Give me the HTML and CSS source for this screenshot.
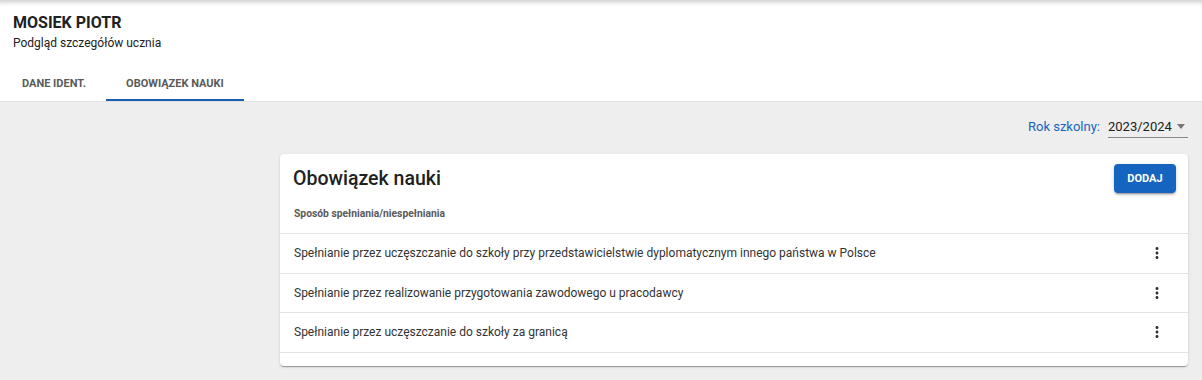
FILE: index.html
```html
<!DOCTYPE html>
<html lang="pl">
<head>
<meta charset="utf-8">
<link rel="stylesheet" href="styles.css">
</head>
<body>
<header class="header">
  <div class="titles">
    <h1 class="name">MOSIEK PIOTR</h1>
    <div class="subtitle">Podgląd szczegółów ucznia</div>
  </div>
  <nav class="tabs">
    <div class="tab">DANE IDENT.</div>
    <div class="tab active">OBOWIĄZEK NAUKI</div>
  </nav>
</header>
<main class="content">
  <div class="year-row">
    <span class="year-label">Rok szkolny:</span>
    <div class="select">
      <span class="select-value">2023/2024</span>
      <span class="select-arrow"></span>
    </div>
  </div>
  <section class="card">
    <div class="card-head">
      <h2 class="card-title">Obowiązek nauki</h2>
      <button class="btn">DODAJ</button>
    </div>
    <div class="col-head">Sposób spełniania/niespełniania</div>
    <div class="row">
      <span class="row-text">Spełnianie przez uczęszczanie do szkoły przy przedstawicielstwie dyplomatycznym innego państwa w Polsce</span>
      <svg class="kebab" viewBox="0 0 24 24" width="24" height="24"><path d="M12 8c1.1 0 2-.9 2-2s-.9-2-2-2-2 .9-2 2 .9 2 2 2zm0 2c-1.1 0-2 .9-2 2s.9 2 2 2 2-.9 2-2-.9-2-2-2zm0 6c-1.1 0-2 .9-2 2s.9 2 2 2 2-.9 2-2-.9-2-2-2z"/></svg>
    </div>
    <div class="row">
      <span class="row-text">Spełnianie przez realizowanie przygotowania zawodowego u pracodawcy</span>
      <svg class="kebab" viewBox="0 0 24 24" width="24" height="24"><path d="M12 8c1.1 0 2-.9 2-2s-.9-2-2-2-2 .9-2 2 .9 2 2 2zm0 2c-1.1 0-2 .9-2 2s.9 2 2 2 2-.9 2-2-.9-2-2-2zm0 6c-1.1 0-2 .9-2 2s.9 2 2 2 2-.9 2-2-.9-2-2-2z"/></svg>
    </div>
    <div class="row">
      <span class="row-text">Spełnianie przez uczęszczanie do szkoły za granicą</span>
      <svg class="kebab" viewBox="0 0 24 24" width="24" height="24"><path d="M12 8c1.1 0 2-.9 2-2s-.9-2-2-2-2 .9-2 2 .9 2 2 2zm0 2c-1.1 0-2 .9-2 2s.9 2 2 2 2-.9 2-2-.9-2-2-2zm0 6c-1.1 0-2 .9-2 2s.9 2 2 2 2-.9 2-2-.9-2-2-2z"/></svg>
    </div>
    <div class="card-foot"></div>
  </section>
</main>
</body>
</html>
```
FILE: styles.css
```css
* { box-sizing: border-box; }
html, body { margin: 0; padding: 0; }
body {
  font-family: Roboto, "Noto Sans", Arial, sans-serif;
  background: #eeeeee;
  color: #212121;
  height: 380px;
  overflow: hidden;
}
.header {
  background: #fff;
  border-bottom: 1px solid #e0e0e0;
  box-shadow: inset 0 6px 5px -4px rgba(0,0,0,0.22);
  height: 102px;
}
.titles { padding: 13px 13px 0; }
.name {
  margin: 0;
  font-size: 16px;
  font-weight: 700;
  line-height: 20px;
  color: #212121;
}
.subtitle {
  font-size: 12px;
  line-height: 18px;
  margin-top: 1px;
  color: #212121;
}
.tabs {
  display: flex;
  margin-top: 16px;
  height: 33px;
}
.tab {
  font-size: 11px;
  font-weight: 700;
  color: #5a5a5a;
  line-height: 30px;
  border-bottom: 2px solid transparent;
  height: 33px;
  padding: 1px 20px 0 22px;
}
.tab.active {
  border-bottom: 2px solid #1a5fb4;
  width: 138px;
  text-align: center;
  padding: 1px 0 0;
}
.content {
  padding: 12px 14px 0 280px;
}
.year-row {
  display: flex;
  justify-content: flex-end;
  align-items: center;
  gap: 8px;
  height: 24px;
}
.year-label {
  font-size: 13px;
  color: #1565c0;
}
.select {
  display: flex;
  align-items: center;
  width: 80px;
  height: 23px;
  border-bottom: 1px solid #8a8a8a;
  margin-top: 1px;
}
.select-value {
  font-size: 13px;
  color: #212121;
  flex: 1;
}
.select-arrow {
  width: 0; height: 0;
  border-left: 4px solid transparent;
  border-right: 4px solid transparent;
  border-top: 5px solid #757575;
  margin-right: 3px;
}
.card {
  margin-top: 16px;
  background: #fff;
  border-radius: 4px;
  box-shadow: 0 2px 1px -1px rgba(0,0,0,0.2), 0 1px 1px 0 rgba(0,0,0,0.14), 0 1px 3px 0 rgba(0,0,0,0.12);
}
.card-head {
  display: flex;
  justify-content: space-between;
  align-items: flex-start;
  padding: 10px 12px 0 13px;
  height: 50px;
}
.card-title {
  margin: 0;
  font-size: 19.5px;
  font-weight: 500;
  line-height: 30px;
  color: #212121;
}
.btn {
  background: #1565c0;
  color: #fff;
  border: none;
  border-radius: 4px;
  font-family: inherit;
  font-size: 11px;
  font-weight: 700;
  width: 62px;
  height: 29px;
  box-shadow: 0 3px 1px -2px rgba(0,0,0,0.2), 0 2px 2px 0 rgba(0,0,0,0.14), 0 1px 5px 0 rgba(0,0,0,0.12);
}
.col-head {
  font-size: 10.3px;
  font-weight: 700;
  color: #5a5a5a;
  padding: 0 14px;
  height: 30px;
  line-height: 20px;
  border-bottom: 1px solid #e3e3e3;
}
.row {
  display: flex;
  align-items: center;
  justify-content: space-between;
  height: 39.5px;
  padding: 0 22px 0 14px;
  border-bottom: 1px solid #e3e3e3;
}
.row-text {
  font-size: 12px;
  color: #333;
}
.kebab {
  width: 18px;
  height: 18px;
  fill: #333;
}
.card-foot { height: 13px; }
```
